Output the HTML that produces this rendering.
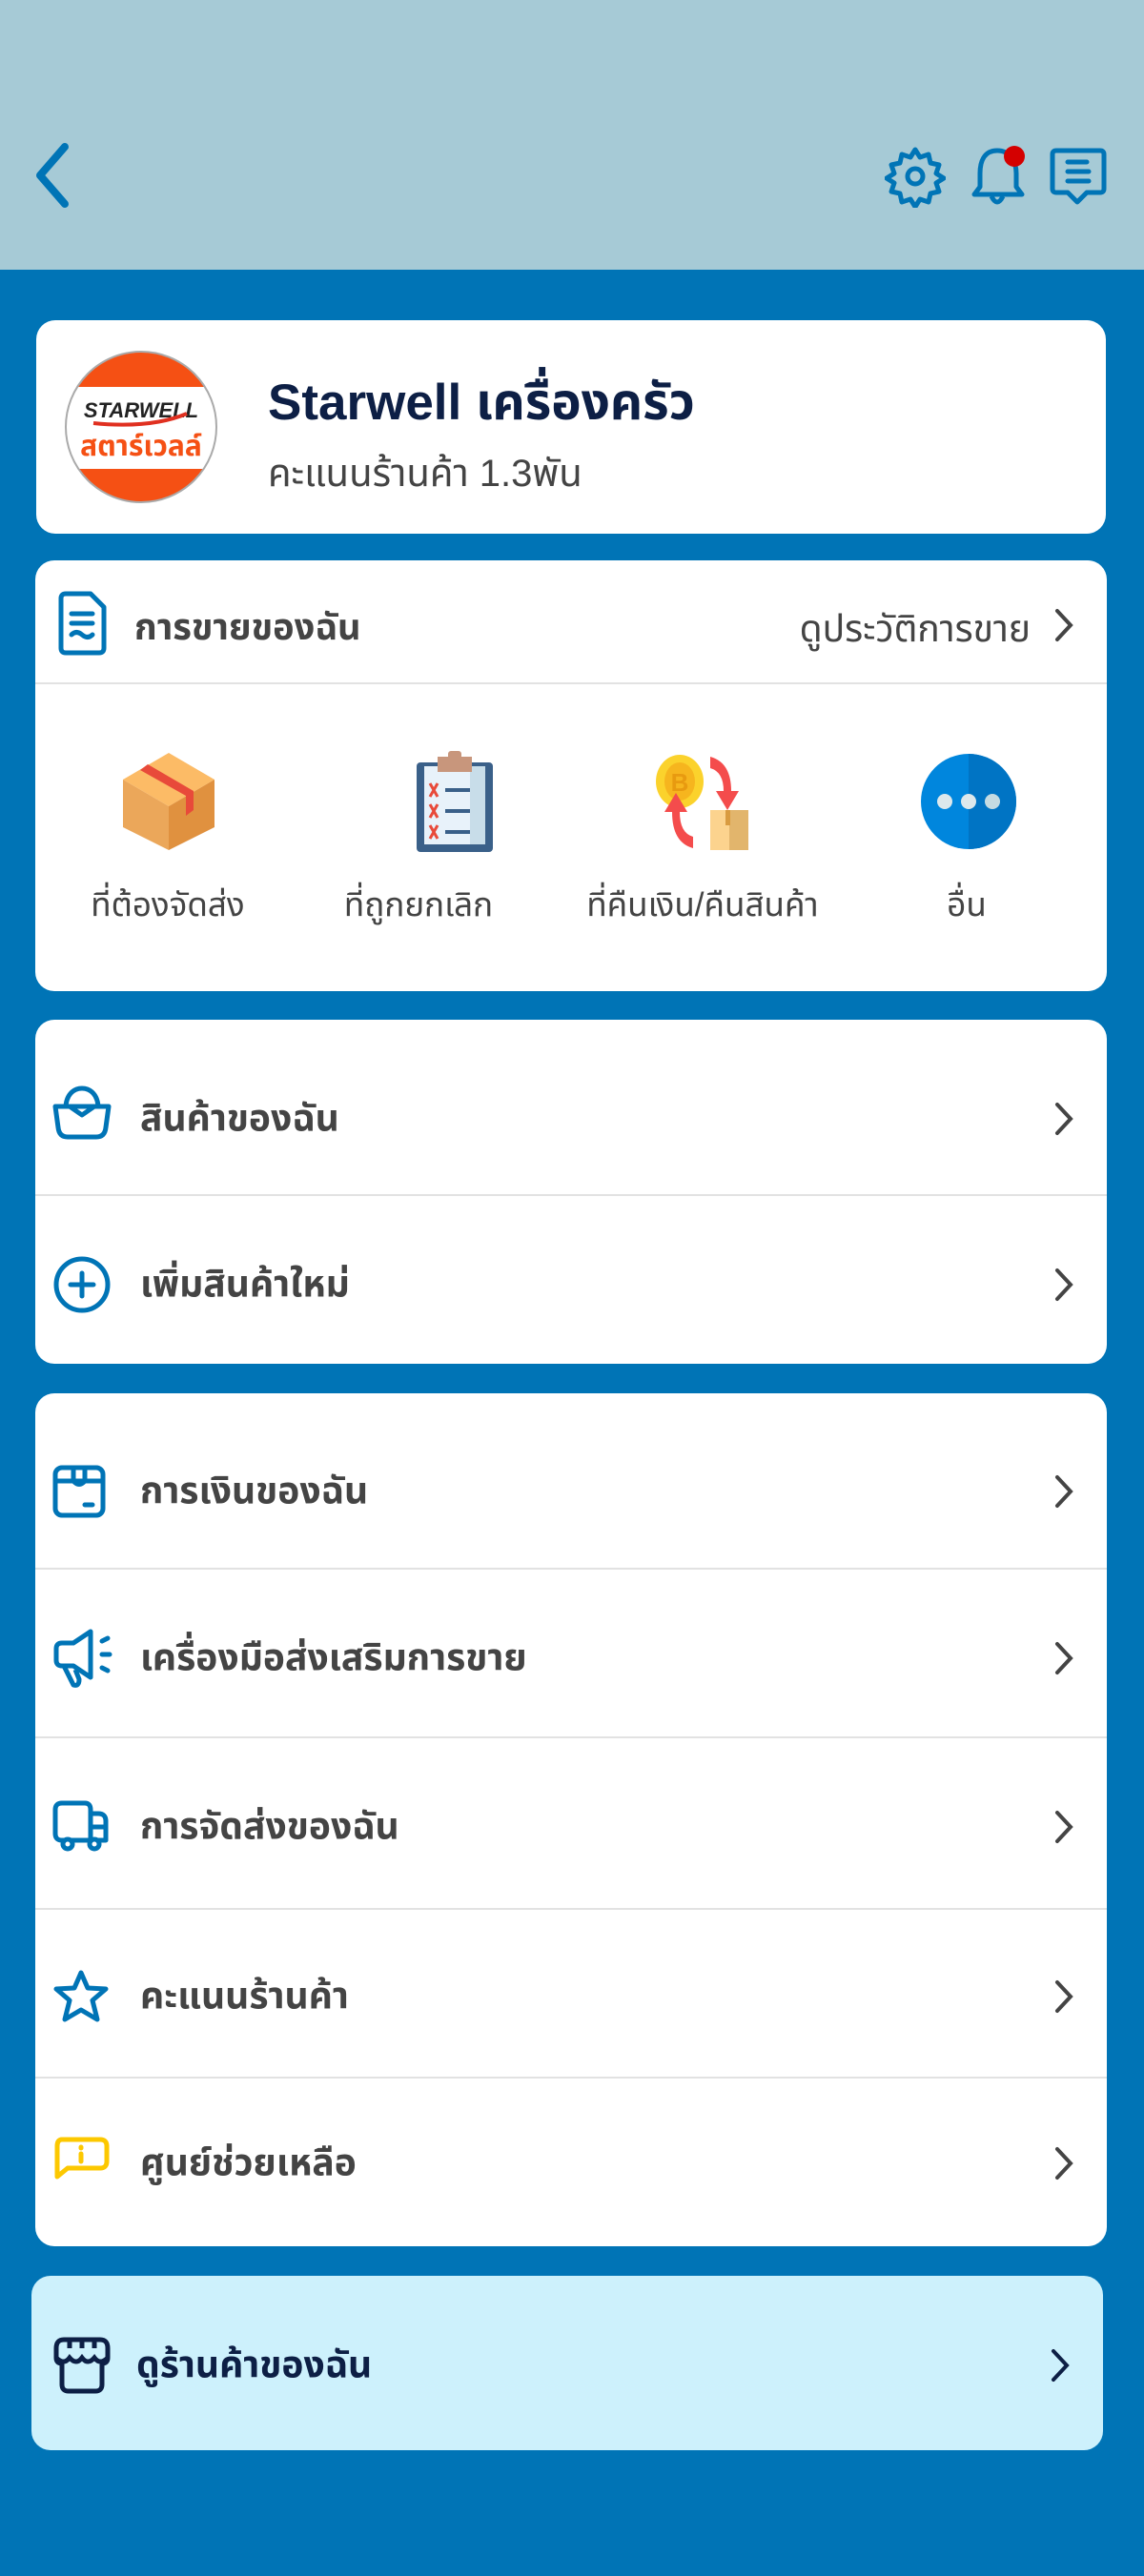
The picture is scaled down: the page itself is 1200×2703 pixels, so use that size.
<!DOCTYPE html>
<html><head><meta charset="utf-8"><style>
*{margin:0;padding:0;box-sizing:border-box}
body{width:1200px;height:2703px;background:#0074b6;font-family:"Liberation Sans","Noto Sans Thai","Noto Sans CJK SC",sans-serif;position:relative;overflow:hidden}
.hdr{position:absolute;left:0;top:0;width:1200px;height:283px;background:#a6cad6}
.card{position:absolute;background:#fff;border-radius:20px}
.abs{position:absolute}
.lbl{position:absolute;left:110px;font-size:39px;font-weight:bold;color:#444;line-height:1;transform:translateY(-50%)}
.chev{position:absolute;right:34px;transform:translateY(-50%)}
.div{position:absolute;left:0;width:100%;height:2px;background:#e2e2e2}
.ic{position:absolute;left:18px;transform:translateY(-50%)}
.sl{position:absolute;font-size:35px;color:#444;transform:translateX(-50%);white-space:nowrap;top:336px}
</style></head><body>
<div class="hdr">
<svg class="abs" style="left:32px;top:148px" width="44" height="72" viewBox="0 0 44 72"><path d="M36 6 L10 36 L36 66" fill="none" stroke="#0074b6" stroke-width="8" stroke-linecap="round" stroke-linejoin="round"/></svg>
<svg class="abs" style="left:928px;top:152px" width="64" height="66" viewBox="0 0 64 66"><path d="M32 5 l5 8 9-3 2 9 9 2-3 9 8 5-8 5 3 9-9 2-2 9-9-3-5 8-5-8-9 3-2-9-9-2 3-9-8-5 8-5-3-9 9-2 2-9 9 3z" fill="none" stroke="#0074b6" stroke-width="5" stroke-linejoin="round"/><circle cx="32" cy="33" r="8" fill="none" stroke="#0074b6" stroke-width="5"/></svg>
<svg class="abs" style="left:1016px;top:150px" width="64" height="70" viewBox="0 0 64 70"><path d="M30 8 C16 8 12 20 12 32 V46 L6 54 H56 L50 46 V32 C50 20 44 8 30 8Z" fill="none" stroke="#0074b6" stroke-width="5" stroke-linejoin="round"/><path d="M24 56 q6 12 12 0" fill="none" stroke="#0074b6" stroke-width="5"/><circle cx="48" cy="14" r="11" fill="#d40000"/></svg>
<svg class="abs" style="left:1100px;top:154px" width="62" height="66" viewBox="0 0 62 66"><path d="M8 4 H54 Q58 4 58 8 V44 Q58 48 54 48 H40 L30 58 L20 48 H8 Q4 48 4 44 V8 Q4 4 8 4Z" fill="none" stroke="#0074b6" stroke-width="5" stroke-linejoin="round"/><path d="M20 16 H40 M20 26 H42 M20 36 H42" stroke="#0074b6" stroke-width="5" stroke-linecap="round"/></svg>
</div>

<div class="card" style="left:38px;top:336px;width:1122px;height:224px">
<svg class="abs" style="left:30px;top:32px" width="160" height="160" viewBox="0 0 160 160"><defs><clipPath id="c"><circle cx="80" cy="80" r="79"/></clipPath></defs><g clip-path="url(#c)"><rect width="160" height="160" fill="#f55014"/><rect y="38" width="160" height="86" fill="#fff"/><text x="80" y="70" font-size="22" font-weight="bold" font-style="italic" text-anchor="middle" fill="#222" font-family="Liberation Sans">STARWELL</text><path d="M30 76 Q90 82 128 66" stroke="#e03020" stroke-width="4" fill="none"/><text x="80" y="110" font-size="30" font-weight="bold" text-anchor="middle" fill="#f55014">สตาร์เวลล์</text></g><circle cx="80" cy="80" r="79" fill="none" stroke="#aaa" stroke-width="2"/></svg>
<div class="abs" style="left:243px;top:48px;font-size:53px;font-weight:bold;color:#0d1f45">Starwell เครื่องครัว</div>
<div class="abs" style="left:243px;top:132px;font-size:40px;color:#444">คะแนนร้านค้า 1.3พัน</div>
</div>

<div class="card" style="left:37px;top:588px;width:1124px;height:452px">
<svg class="abs" style="left:24px;top:32px" width="52" height="68" viewBox="0 0 52 68"><path d="M8 3 H34 L48 17 V60 Q48 65 43 65 H8 Q3 65 3 60 V8 Q3 3 8 3Z" fill="none" stroke="#0074b6" stroke-width="5" stroke-linejoin="round"/><path d="M14 24 H36 M14 34 H36 M14 46 q5-5 11 0 t11 0" fill="none" stroke="#0074b6" stroke-width="5" stroke-linecap="round"/></svg>
<div class="abs" style="left:104px;top:44px;font-size:38px;font-weight:bold;color:#444">การขายของฉัน</div>
<div class="abs" style="right:80px;top:44px;font-size:39px;color:#444">ดูประวัติการขาย</div>
<svg class="abs" style="right:34px;top:50px" width="22" height="36" viewBox="0 0 22 36"><path d="M4 3 L18 18 L4 33" fill="none" stroke="#444" stroke-width="4" stroke-linecap="round"/></svg>
<div class="div" style="top:128px"></div>
<svg class="abs" style="left:90px;top:200px" width="100" height="104" viewBox="0 0 100 104"><path d="M50 2 L98 30 L50 58 L2 30Z" fill="#fcbb66"/><path d="M2 30 L50 58 V104 L2 80Z" fill="#eba75a"/><path d="M98 30 L50 58 V104 L98 80Z" fill="#e0913f"/><path d="M28 14 L76 42 L76 62 L68 68 L68 47 L20 20Z" fill="#e84a3a"/></svg>
<svg class="abs" style="left:400px;top:200px" width="80" height="106" viewBox="0 0 80 106"><rect x="0" y="12" width="80" height="94" rx="4" fill="#3a6089"/><rect x="8" y="16" width="64" height="82" fill="#e8f2fa"/><rect x="56" y="16" width="16" height="82" fill="#c8dde9"/><rect x="22" y="6" width="36" height="16" fill="#c8967c"/><rect x="33" y="0" width="14" height="10" rx="3" fill="#c8967c"/><path d="M14 34 l8 14 M22 34 l-8 14 M14 56 l8 14 M22 56 l-8 14 M14 78 l8 14 M22 78 l-8 14" stroke="#e84a3a" stroke-width="3"/><path d="M30 41 H56 M30 63 H56 M30 85 H56" stroke="#3a6089" stroke-width="4"/></svg>
<svg class="abs" style="left:650px;top:204px" width="100" height="100" viewBox="0 0 100 100"><ellipse cx="26" cy="28" rx="25" ry="28" fill="#fbd22c"/><ellipse cx="26" cy="28" rx="16" ry="20" fill="#f6b51e"/><text x="26" y="38" font-size="26" text-anchor="middle" fill="#e89a10" font-family="Liberation Sans" font-weight="bold">B</text><path d="M58 2 q22 6 22 36 h8 l-12 20 l-12-20 h8 q0-20-14-24z" fill="#f44c4c"/><path d="M40 98 q-22-6-22-38 h-8 l12-20 l12 20 h-8 q0 22 14 26z" fill="#f44c4c"/><rect x="58" y="58" width="40" height="42" fill="#fcd38e"/><rect x="78" y="58" width="20" height="42" fill="#e2b56c"/><rect x="74" y="58" width="5" height="16" fill="#d99b40"/></svg>
<svg class="abs" style="left:929px;top:203px" width="100" height="100" viewBox="0 0 100 100"><circle cx="50" cy="50" r="50" fill="#0086dd"/><path d="M50 0 A50 50 0 0 1 50 100Z" fill="#0074c4"/><circle cx="25" cy="50" r="8" fill="#dde8ec"/><circle cx="50" cy="50" r="8" fill="#dde8ec"/><circle cx="75" cy="50" r="8" fill="#c5dbe2"/></svg>
<div class="sl" style="left:139px">ที่ต้องจัดส่ง</div>
<div class="sl" style="left:402px">ที่ถูกยกเลิก</div>
<div class="sl" style="left:700px">ที่คืนเงิน/คืนสินค้า</div>
<div class="sl" style="left:977px">อื่น</div>
</div>

<div class="card" style="left:37px;top:1070px;width:1124px;height:361px">
<div class="div" style="top:183px"></div>
<svg class="ic" style="top:98px" width="62" height="58" viewBox="0 0 62 58"><path d="M14 24 C14 10 22 3 31 3 C40 3 48 10 48 24" fill="none" stroke="#0074b6" stroke-width="5"/><path d="M3 22 H59 L56 44 Q55 54 46 54 H16 Q7 54 6 44Z" fill="none" stroke="#0074b6" stroke-width="5" stroke-linejoin="round"/><path d="M18 22 L31 31 L44 22" fill="none" stroke="#0074b6" stroke-width="5" stroke-linejoin="round"/></svg>
<div class="lbl" style="top:104px">สินค้าของฉัน</div>
<svg class="chev" style="top:104px" width="22" height="36" viewBox="0 0 22 36"><path d="M4 3 L18 18 L4 33" fill="none" stroke="#444" stroke-width="4" stroke-linecap="round"/></svg>
<svg class="ic" style="top:278px" width="62" height="62" viewBox="0 0 62 62"><circle cx="31" cy="31" r="27" fill="none" stroke="#0074b6" stroke-width="5"/><path d="M31 19 V43 M19 31 H43" stroke="#0074b6" stroke-width="5" stroke-linecap="round"/></svg>
<div class="lbl" style="top:278px">เพิ่มสินค้าใหม่</div>
<svg class="chev" style="top:278px" width="22" height="36" viewBox="0 0 22 36"><path d="M4 3 L18 18 L4 33" fill="none" stroke="#444" stroke-width="4" stroke-linecap="round"/></svg>
</div>

<div class="card" style="left:37px;top:1462px;width:1124px;height:895px">
<div class="div" style="top:183px"></div>
<div class="div" style="top:360px"></div>
<div class="div" style="top:540px"></div>
<div class="div" style="top:717px"></div>
<svg class="ic" style="top:103px" width="56" height="56" viewBox="0 0 56 56"><rect x="3" y="3" width="50" height="50" rx="7" fill="none" stroke="#0074b6" stroke-width="5"/><path d="M3 17 H53 M22 3 V17 Q28 24 34 17 V3 M34 42 H42" fill="none" stroke="#0074b6" stroke-width="5" stroke-linecap="round"/></svg>
<div class="lbl" style="top:103px">การเงินของฉัน</div>
<svg class="ic" style="top:278px" width="64" height="64" viewBox="0 0 64 64"><path d="M40 4 V52 L22 40 H10 Q4 40 4 34 V22 Q4 16 10 16 H22Z" fill="none" stroke="#0074b6" stroke-width="5" stroke-linejoin="round"/><path d="M12 40 L22 60 Q28 62 28 54 L24 44" fill="none" stroke="#0074b6" stroke-width="5" stroke-linejoin="round"/><path d="M52 14 L58 11 M52 28 H60 M52 42 L58 45" stroke="#0074b6" stroke-width="5" stroke-linecap="round"/></svg>
<div class="lbl" style="top:278px">เครื่องมือส่งเสริมการขาย</div>
<svg class="ic" style="top:455px" width="60" height="56" viewBox="0 0 60 56"><path d="M10 3 H34 Q40 3 40 10 V42 H10 Q3 42 3 35 V10 Q3 3 10 3Z M40 14 H48 Q56 14 56 22 V42 H40" fill="none" stroke="#0074b6" stroke-width="5" stroke-linejoin="round"/><path d="M42 28 H56" stroke="#0074b6" stroke-width="5"/><circle cx="16" cy="46" r="5" fill="#fff" stroke="#0074b6" stroke-width="5"/><circle cx="44" cy="46" r="5" fill="#fff" stroke="#0074b6" stroke-width="5"/></svg>
<div class="lbl" style="top:455px">การจัดส่งของฉัน</div>
<svg class="ic" style="top:633px" width="60" height="58" viewBox="0 0 60 58"><path d="M30 4 L37 20 L56 21 L42 33 L47 53 L30 43 L13 53 L18 33 L4 21 L23 20Z" fill="none" stroke="#0074b6" stroke-width="5" stroke-linejoin="round"/></svg>
<div class="lbl" style="top:633px">คะแนนร้านค้า</div>
<svg class="ic" style="top:808px" width="60" height="56" viewBox="0 0 60 56"><path d="M10 3 H50 Q57 3 57 10 V26 Q57 33 50 33 H16 L5 42 V10 Q5 3 10 3Z" fill="none" stroke="#fcc800" stroke-width="5" stroke-linejoin="round"/><path d="M30 11 V12 M30 18 V26" stroke="#fcc800" stroke-width="5" stroke-linecap="round"/></svg>
<div class="lbl" style="top:808px">ศูนย์ช่วยเหลือ</div>
<svg class="chev" style="top:103px" width="22" height="36" viewBox="0 0 22 36"><path d="M4 3 L18 18 L4 33" fill="none" stroke="#444" stroke-width="4" stroke-linecap="round"/></svg>
<svg class="chev" style="top:278px" width="22" height="36" viewBox="0 0 22 36"><path d="M4 3 L18 18 L4 33" fill="none" stroke="#444" stroke-width="4" stroke-linecap="round"/></svg>
<svg class="chev" style="top:455px" width="22" height="36" viewBox="0 0 22 36"><path d="M4 3 L18 18 L4 33" fill="none" stroke="#444" stroke-width="4" stroke-linecap="round"/></svg>
<svg class="chev" style="top:633px" width="22" height="36" viewBox="0 0 22 36"><path d="M4 3 L18 18 L4 33" fill="none" stroke="#444" stroke-width="4" stroke-linecap="round"/></svg>
<svg class="chev" style="top:808px" width="22" height="36" viewBox="0 0 22 36"><path d="M4 3 L18 18 L4 33" fill="none" stroke="#444" stroke-width="4" stroke-linecap="round"/></svg>
</div>

<div class="card" style="left:33px;top:2388px;width:1124px;height:183px;background:#cdf1fc">
<svg class="ic" style="top:94px;left:22px" width="62" height="60" viewBox="0 0 62 60"><path d="M12 3 H50 Q58 3 58 12 V22 Q58 28 52 28 V50 Q52 57 45 57 H17 Q10 57 10 50 V28 Q4 28 4 22 V12 Q4 3 12 3Z" fill="none" stroke="#0d1f45" stroke-width="5" stroke-linejoin="round"/><path d="M4 22 Q12 30 18 22 Q25 30 31 22 Q37 30 44 22 Q50 30 58 22 M18 3 V12 M31 3 V12 M44 3 V12" fill="none" stroke="#0d1f45" stroke-width="5"/></svg>
<div class="lbl" style="top:94px;left:110px;color:#0d1f45">ดูร้านค้าของฉัน</div>
<svg class="chev" style="top:94px" width="22" height="36" viewBox="0 0 22 36"><path d="M4 3 L18 18 L4 33" fill="none" stroke="#0d1f45" stroke-width="4" stroke-linecap="round"/></svg>
</div>
</body></html>
